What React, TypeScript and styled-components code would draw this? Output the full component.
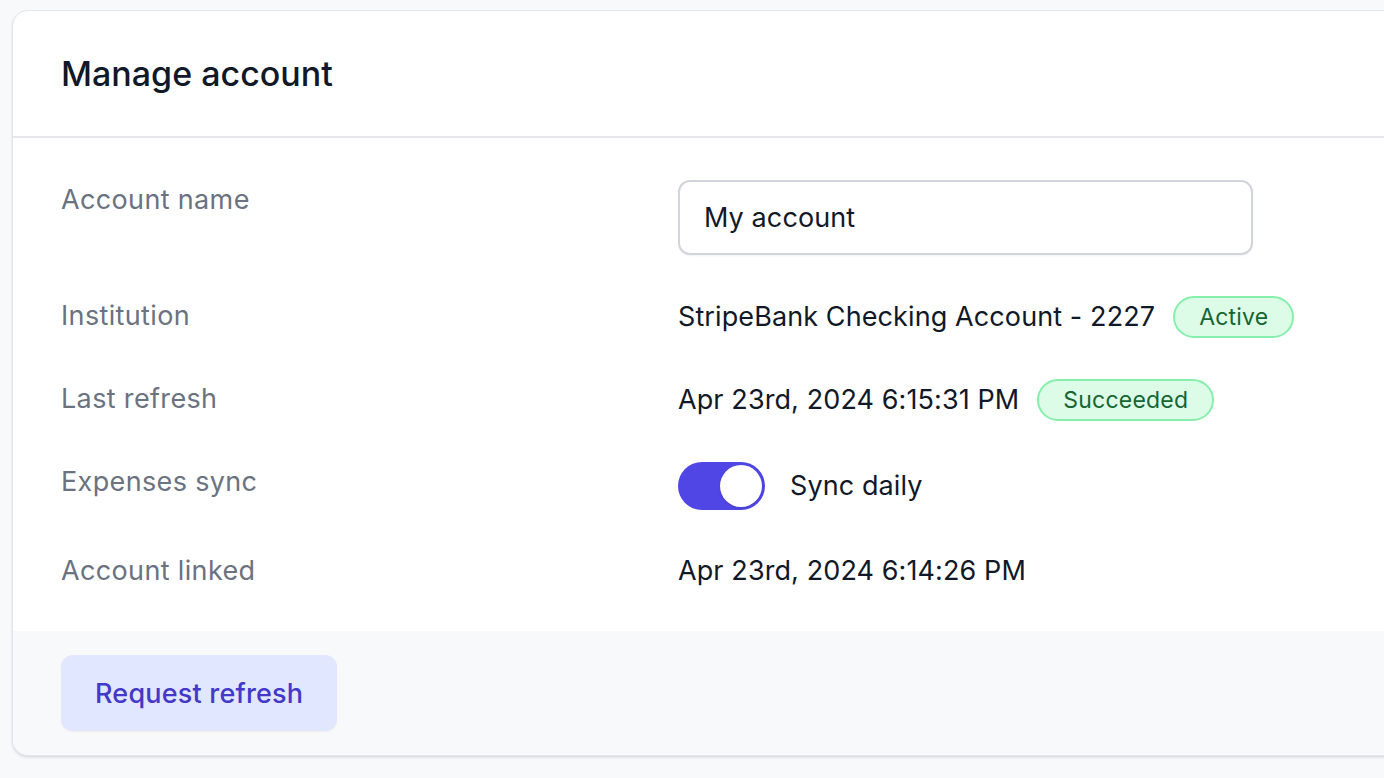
import React from "react";
import styled, { createGlobalStyle } from "styled-components";

const Global = createGlobalStyle`
  html, body {
    margin: 0;
    padding: 0;
    background: #f8f9fb;
    overflow: hidden;
  }
  body {
    font-family: Inter, "Noto Sans", "Liberation Sans", sans-serif;
    -webkit-font-smoothing: antialiased;
  }
  * { box-sizing: border-box; }
`;

const Page = styled.div`
  padding: 10px 0 0 12px;
  width: 1384px;
  height: 778px;
`;

const Card = styled.section`
  width: 1600px;
  background: #ffffff;
  border: 1px solid #e4e5ea;
  border-radius: 16px;
  box-shadow: 0 2px 3px rgba(17, 24, 39, 0.08), 0 1px 2px rgba(17, 24, 39, 0.06);
  overflow: hidden;
`;

const Header = styled.header`
  padding: 41px 48px 40px;
  border-bottom: 2px solid #e5e7eb;
`;

const Title = styled.h2`
  margin: 0;
  font-size: 34px;
  line-height: 44px;
  font-weight: 500;
  color: #111827;
  letter-spacing: 0px;
`;

const Body = styled.dl`
  margin: 0;
  padding: 42px 48px 40px;
  display: flex;
  flex-direction: column;
  gap: 41px;
`;

const Row = styled.div`
  display: grid;
  grid-template-columns: 617px 1fr;
  align-items: start;
`;

const Label = styled.dt`
  font-size: 27px;
  line-height: 40px;
  letter-spacing: 0.35px;
  color: #6b7280;
`;

const Value = styled.dd<{ $h?: number }>`
  margin: 0;
  display: flex;
  align-items: center;
  gap: 18px;
  min-height: ${(p) => p.$h ?? 40}px;
  font-size: 27px;
  line-height: 40px;
  letter-spacing: 0.1px;
  color: #111827;
`;

const Input = styled.input`
  width: 575px;
  height: 75px;
  padding: 0 24px;
  border: 2px solid #d1d5db;
  border-radius: 12px;
  font-family: inherit;
  font-size: 27px;
  letter-spacing: 0.1px;
  color: #111827;
  background: #fff;
  box-shadow: 0 1px 2px rgba(0, 0, 0, 0.05);
  outline: none;
`;

const Badge = styled.span`
  display: inline-flex;
  align-items: center;
  height: 42px;
  padding: 0 24px;
  border-radius: 999px;
  background: #dcfce7;
  border: 2px solid #86efac;
  color: #166534;
  font-size: 23px;
  letter-spacing: 0.2px;
  line-height: 1;
`;

const Toggle = styled.button<{ $on: boolean }>`
  position: relative;
  width: 87px;
  height: 48px;
  padding: 0;
  border: 3px solid transparent;
  border-radius: 999px;
  background: ${(p) => (p.$on ? "#4f46e5" : "#e5e7eb")};
  cursor: pointer;
  flex-shrink: 0;
`;

const Knob = styled.span<{ $on: boolean }>`
  position: absolute;
  top: 0;
  left: ${(p) => (p.$on ? "39px" : "0")};
  width: 42px;
  height: 42px;
  border-radius: 50%;
  background: #ffffff;
  box-shadow: 0 1px 3px rgba(0, 0, 0, 0.1);
`;

const ToggleText = styled.span`
  margin-left: 7px;
`;

const Footer = styled.footer`
  background: #f8f9fb;
  padding: 24px 48px 24px;
`;

const Button = styled.button`
  height: 76px;
  padding: 0 34px;
  border: none;
  border-radius: 12px;
  background: #e0e7ff;
  color: #4338ca;
  font-family: inherit;
  font-size: 27px;
  letter-spacing: 0.2px;
  font-weight: 500;
  box-shadow: 0 1px 2px rgba(0, 0, 0, 0.05);
  cursor: pointer;
`;

export default function App() {
  const [on, setOn] = React.useState(true);
  return (
    <>
      <Global />
      <Page>
        <Card>
          <Header>
            <Title>Manage account</Title>
          </Header>
          <Body>
            <Row>
              <Label>Account name</Label>
              <Value $h={75}>
                <Input defaultValue="My account" />
              </Value>
            </Row>
            <Row>
              <Label>Institution</Label>
              <Value $h={42}>
                StripeBank Checking Account - 2227
                <Badge>Active</Badge>
              </Value>
            </Row>
            <Row>
              <Label>Last refresh</Label>
              <Value $h={42}>
                Apr 23rd, 2024 6:15:31 PM
                <Badge>Succeeded</Badge>
              </Value>
            </Row>
            <Row>
              <Label>Expenses sync</Label>
              <Value $h={48}>
                <Toggle $on={on} onClick={() => setOn(!on)} aria-pressed={on}>
                  <Knob $on={on} />
                </Toggle>
                <ToggleText>Sync daily</ToggleText>
              </Value>
            </Row>
            <Row>
              <Label>Account linked</Label>
              <Value>Apr 23rd, 2024 6:14:26 PM</Value>
            </Row>
          </Body>
          <Footer>
            <Button>Request refresh</Button>
          </Footer>
        </Card>
      </Page>
    </>
  );
}
